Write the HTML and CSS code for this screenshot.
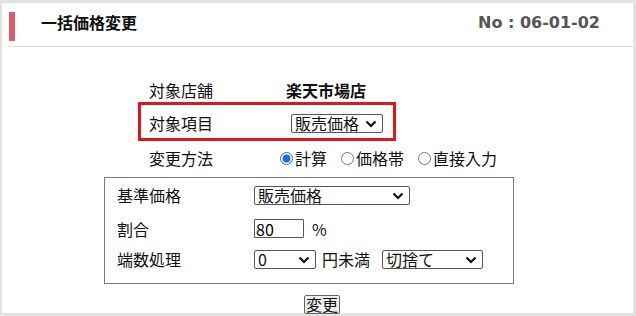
FILE: index.html
```html
<!DOCTYPE html>
<html lang="ja">
<head>
<meta charset="utf-8">
<link rel="stylesheet" href="styles.css">
</head>
<body>
<div class="panel">
  <div class="header">
    <span class="bar"></span>
    <h1 class="title">一括価格変更</h1>
    <span class="no">No : 06-01-02</span>
  </div>
  <div class="form">
    <div class="row r1">
      <span class="label">対象店舗</span>
      <span class="shop">楽天市場店</span>
    </div>
    <div class="hl">
      <div class="row r2">
        <span class="label">対象項目</span>
        <span class="sel w92 ml5">
          <select><option>販売価格</option></select>
          <svg class="chev" viewBox="0 0 12 8"><path d="M1.5 1.5 L6 6 L10.5 1.5" fill="none" stroke="#111" stroke-width="2.2"/></svg>
        </span>
      </div>
    </div>
    <div class="row r3">
      <span class="label">変更方法</span>
      <span class="radios">
        <label class="rad"><input type="radio" name="m" checked>計算</label>
        <label class="rad"><input type="radio" name="m">価格帯</label>
        <label class="rad"><input type="radio" name="m">直接入力</label>
      </span>
    </div>
    <div class="box">
      <div class="row b1">
        <span class="label2">基準価格</span>
        <span class="sel w155">
          <select><option>販売価格</option></select>
          <svg class="chev" viewBox="0 0 12 8"><path d="M1.5 1.5 L6 6 L10.5 1.5" fill="none" stroke="#111" stroke-width="2.2"/></svg>
        </span>
      </div>
      <div class="row b2">
        <span class="label2">割合</span>
        <input class="num" type="text" value="80">
        <span class="pct">%</span>
      </div>
      <div class="row b3">
        <span class="label2">端数処理</span>
        <span class="sel w62">
          <select><option>0</option></select>
          <svg class="chev" viewBox="0 0 12 8"><path d="M1.5 1.5 L6 6 L10.5 1.5" fill="none" stroke="#111" stroke-width="2.2"/></svg>
        </span>
        <span class="unit">円未満</span>
        <span class="sel w101">
          <select><option>切捨て</option></select>
          <svg class="chev" viewBox="0 0 12 8"><path d="M1.5 1.5 L6 6 L10.5 1.5" fill="none" stroke="#111" stroke-width="2.2"/></svg>
        </span>
      </div>
    </div>
    <div class="btnrow"><button class="btn" type="button">変更</button></div>
  </div>
</div>
</body>
</html>
```
FILE: styles.css
```css
* { box-sizing: border-box; }
html, body { margin: 0; padding: 0; }
body {
  background: #e2e2e2;
  font-family: "Noto Sans CJK JP", "Noto Sans", sans-serif;
  font-size: 16px;
  color: #111;
  width: 636px;
  height: 316px;
  overflow: hidden;
}
.panel {
  background: #fff;
  margin: 3px 3px 0 2px;
  height: 310px;
}
.header {
  margin-left: 7px;
  padding: 9px 33px 5px 0;
  border-bottom: 1px solid #dcdcdc;
  display: flex;
  align-items: flex-start;
}
.bar {
  width: 6px;
  height: 29px;
  background: #e05a6d;
  flex: none;
}
.title {
  margin: 0 0 0 26px;
  font-size: 16px;
  line-height: 21px;
  font-weight: bold;
  color: #111;
}
.no {
  margin-left: auto;
  font-family: "DejaVu Sans", Verdana, sans-serif;
  font-weight: bold;
  font-size: 16px;
  line-height: 22px;
  color: #555;
}
.form {
  padding: 30px 0 0 102px;
}
.row {
  display: flex;
  align-items: center;
}
.r1, .r3 { margin-left: 34px; padding-left: 11px; }
.r1 { height: 25px; }
.r3 { height: 34px; }
.label { width: 137px; line-height: 20px; }
.shop { font-weight: bold; line-height: 20px; }
.hl {
  margin-left: 34px;
  width: 258px;
  height: 39px;
  border: 3px solid #e1151c;
  padding: 3px 0 0 8px;
}
.r2 { height: 30px; }
.ml5 { margin-left: 5px; }
.sel {
  position: relative;
  display: inline-block;
  height: 19px;
}
.sel select {
  appearance: none;
  -webkit-appearance: none;
  width: 100%;
  height: 19px;
  border: 1px solid #555;
  border-radius: 2px;
  background: #fff;
  font-family: inherit;
  font-size: 16px;
  line-height: 17px;
  padding: 0 0 0 3px;
  color: #111;
  margin: 0;
  display: block;
}
.chev {
  position: absolute;
  right: 6px;
  top: 6px;
  width: 12px;
  height: 8px;
  pointer-events: none;
}
.w92 { width: 92px; }
.w155 { width: 156px; }
.w62 { width: 62px; }
.w101 { width: 101px; }
.radios { display: flex; align-items: center; margin-left: -11px; }
.rad { display: inline-flex; align-items: center; line-height: 20px; margin-right: 9px; }
.rad input { width: 13px; height: 13px; margin: 0 2px 0 5px; accent-color: #1a6fe0; }
.box {
  margin-top: 2px;
  width: 410px;
  height: 107px;
  border: 1px solid #7a7a7a;
  padding-left: 12px;
}
.label2 { width: 137px; line-height: 20px; }
.b1 { height: 34px; }
.b2 { height: 33px; }
.b3 { height: 28px; }
.num {
  width: 50px;
  height: 19px;
  border: 1px solid #555;
  border-radius: 1px;
  font-family: inherit;
  font-size: 16px;
  padding: 0 1px;
  margin: 0;
  line-height: 17px;
}
.pct { margin-left: 8px; line-height: 20px; }
.unit { margin: 0 12px 0 6px; line-height: 20px; }
.btnrow { padding: 8px 0 0 200px; }
.btn {
  height: 19px;
  padding: 0 1px;
  font-family: inherit;
  font-size: 16px;
  line-height: 16px;
  background: #efefef;
  border: 1px solid #666;
  border-radius: 2px;
  color: #111;
}
```
